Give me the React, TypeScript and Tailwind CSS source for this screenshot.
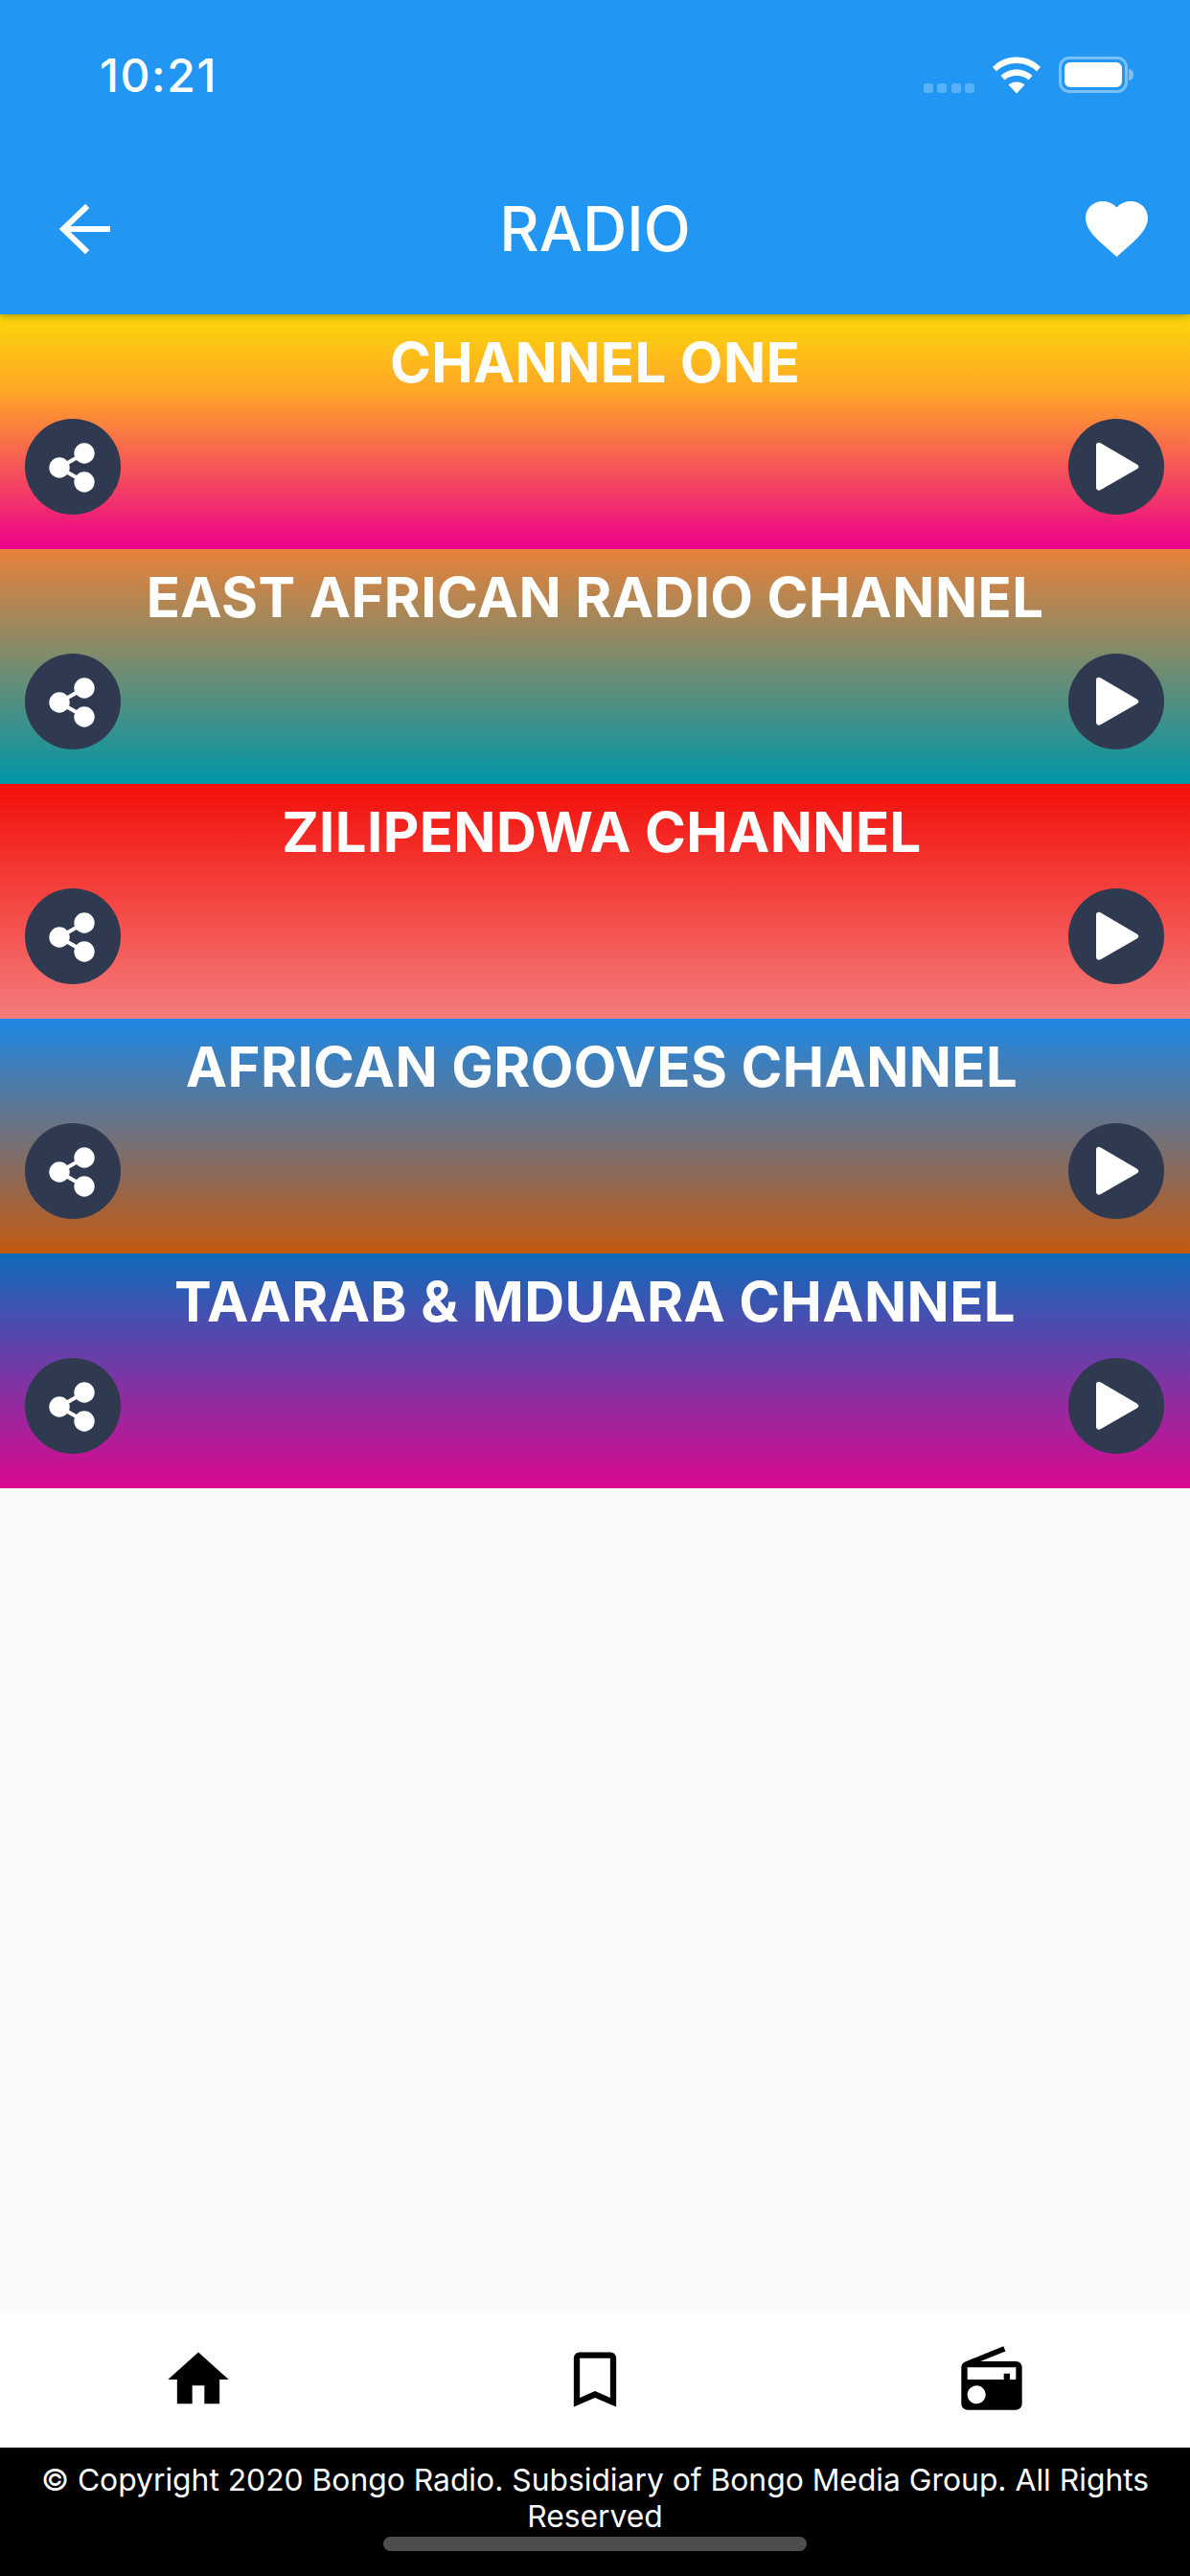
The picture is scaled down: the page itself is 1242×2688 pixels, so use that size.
const font = { fontFamily: "Inter, 'Liberation Sans', sans-serif" };

const cards = [
  { title: "CHANNEL ONE", indent: "", bg: "bg-[linear-gradient(to_bottom,#fbd80a_0%,#ffa726_32%,#ec008c_100%)]" },
  { title: "EAST AFRICAN RADIO CHANNEL", indent: "", bg: "bg-[linear-gradient(to_bottom,#e8813a_0%,#0097a7_100%)]" },
  { title: "ZILIPENDWA CHANNEL", indent: "pl-[14px]", bg: "bg-[linear-gradient(to_bottom,#f30f08_0%,#f47c7c_100%)]" },
  { title: "AFRICAN GROOVES CHANNEL", indent: "pl-[14px]", bg: "bg-[linear-gradient(to_bottom,#1e88e5_0%,#c45a10_100%)]" },
  { title: "TAARAB & MDUARA CHANNEL", indent: "", bg: "bg-[linear-gradient(to_bottom,#0f6abb_0%,#dc0890_100%)]" },
];

function Card({ title, bg, indent }: { title: string; bg: string; indent: string }) {
  return (
    <div className={`h-[245px] ${bg} flex flex-col items-center`}>
      <div className={`h-[100px] flex items-center justify-center text-white font-bold text-[58px] leading-none tracking-[0.4px] ${indent}`}>
        {title}
      </div>
      <div className="w-full flex justify-between pl-[26px] pr-[27px] mt-[9px]">
        <button className="w-[100px] h-[100px] rounded-full bg-[#2f3a51] flex items-center justify-center">
          <svg width="60" height="60" viewBox="0 0 60 60" fill="#fff" stroke="#fff">
            <line x1="42" y1="16" x2="16" y2="31" strokeWidth="4" />
            <line x1="42" y1="46" x2="16" y2="31" strokeWidth="4" />
            <circle cx="42" cy="16" r="10.700" stroke="none" />
            <circle cx="16" cy="31" r="10.700" stroke="none" />
            <circle cx="42" cy="46" r="10.700" stroke="none" />
          </svg>
        </button>
        <button className="w-[100px] h-[100px] rounded-full bg-[#2f3a51] flex items-center justify-center">
          <svg width="60" height="60" viewBox="0 0 60 60" fill="#fff">
            <path d="M9 8C9 5 11.500 4 14 5.500L51.500 27.500C54 29 54 31 51.500 32.500L14 54C11.500 55.500 9 54.500 9 51.500Z" />
          </svg>
        </button>
      </div>
    </div>
  );
}

export default function App() {
  return (
    <div className="w-[1242px] h-[2688px] flex flex-col bg-[#fafafa] overflow-hidden" style={font}>
      <header className="relative z-10 h-[328px] shrink-0 bg-[#2196f3] flex flex-col text-white shadow-[0_2px_8px_rgba(0,0,0,0.3)]">
        <div className="h-[132px] flex items-center justify-between pl-[104px] pr-[59px] pt-[24px]">
          <span className="text-[48px] font-medium leading-none tracking-[1.600px] mt-[2px]">10:21</span>
          <div className="flex items-center gap-[18px]">
            <div className="flex gap-[4.500px] mt-[28px]">
              <span className="w-[10px] h-[10px] rounded-[3px] bg-white/25" />
              <span className="w-[10px] h-[10px] rounded-[3px] bg-white/25" />
              <span className="w-[10px] h-[10px] rounded-[3px] bg-white/25" />
              <span className="w-[10px] h-[10px] rounded-[3px] bg-white/25" />
            </div>
            <svg width="52" height="39" viewBox="0 0 52 38" fill="#fff">
              <path d="M26 0C16 0 7.500 4 1 10.500L5 15C10.500 9.500 18 6.500 26 6.500S41.500 9.500 47 15L51 10.500C44.500 4 36 0 26 0Z" />
              <path d="M26 13C19.500 13 14 15.500 9.500 19.500L13.500 24C16.500 21 21 19.500 26 19.500S35.500 21 38.500 24L42.500 19.500C38 15.500 32.500 13 26 13Z" />
              <path d="M26 26C22.500 26 20 27 17.500 29L26 38L34.500 29C32 27 29.500 26 26 26Z" />
            </svg>
            <div className="flex items-center gap-[1px]">
              <div className="w-[72px] h-[38px] rounded-[11px] border-[3px] border-white/40 p-[3px]">
                <div className="w-full h-full rounded-[6px] bg-white" />
              </div>
              <div className="w-[5px] h-[12px] rounded-r-full bg-white/40" />
            </div>
          </div>
        </div>
        <div className="flex-1 flex items-center justify-between pl-[62px] pr-[44px] pt-[17px] relative">
          <svg width="54" height="52" viewBox="0 0 54 52" fill="none" stroke="#fff" strokeWidth="6" strokeLinecap="square">
            <path d="M27 4L4 26L27 48M6 26H50" />
          </svg>
          <span className="absolute left-0 right-0 text-center text-[64px] leading-none font-medium">RADIO</span>
          <svg width="65" height="58" viewBox="2 3 20 18.350" fill="#fff" preserveAspectRatio="none">
            <path d="M12 21.350l-1.450-1.320C5.400 15.360 2 12.280 2 8.500 2 5.420 4.420 3 7.500 3c1.740 0 3.410.81 4.500 2.090C13.090 3.810 14.760 3 16.500 3 19.580 3 22 5.420 22 8.500c0 3.780-3.400 6.860-8.550 11.540L12 21.350z" />
          </svg>
        </div>
      </header>

      <main className="flex-1 flex flex-col">
        {cards.map((c) => (
          <Card key={c.title} {...c} />
        ))}
      </main>

      <nav className="h-[143px] shrink-0 bg-white grid grid-cols-3 items-center justify-items-center">
        <svg width="76" height="76" viewBox="0 0 24 24" fill="#000">
          <path d="M10 20v-6h4v6h5v-8h3L12 3 2 12h3v8z" />
        </svg>
        <svg width="76" height="76" viewBox="0 0 24 24" fill="#000">
          <path d="M17 3H7c-1.100 0-2 .9-2 2v16l7-3 7 3V5c0-1.100-.9-2-2-2zm0 15l-5-2.180L7 18V5h10v13z" />
        </svg>
        <svg width="76" height="76" viewBox="0 0 24 24" fill="#000">
          <path d="M3.240 6.150C2.510 6.430 2 7.170 2 8v12c0 1.100.89 2 2 2h16c1.110 0 2-.9 2-2V8c0-1.110-.89-2-2-2H8.300l8.260-3.340L15.880 1 3.240 6.150zM7 20c-1.660 0-3-1.340-3-3s1.340-3 3-3 3 1.340 3 3-1.340 3-3 3zm13-8h-2v-2h-2v2H4V8h16v4z" />
        </svg>
      </nav>

      <footer className="h-[134px] shrink-0 bg-black text-white flex flex-col items-center pt-[15px] relative">
        <p className="w-[1180px] text-center text-[31.800px] leading-[38px]">
          © Copyright 2020 Bongo Radio. Subsidiary of Bongo Media Group. All Rights Reserved
        </p>
        <div className="absolute top-[93px] left-[400px] w-[442px] h-[15px] rounded-full bg-[#4d4d4d]" />
      </footer>
    </div>
  );
}
